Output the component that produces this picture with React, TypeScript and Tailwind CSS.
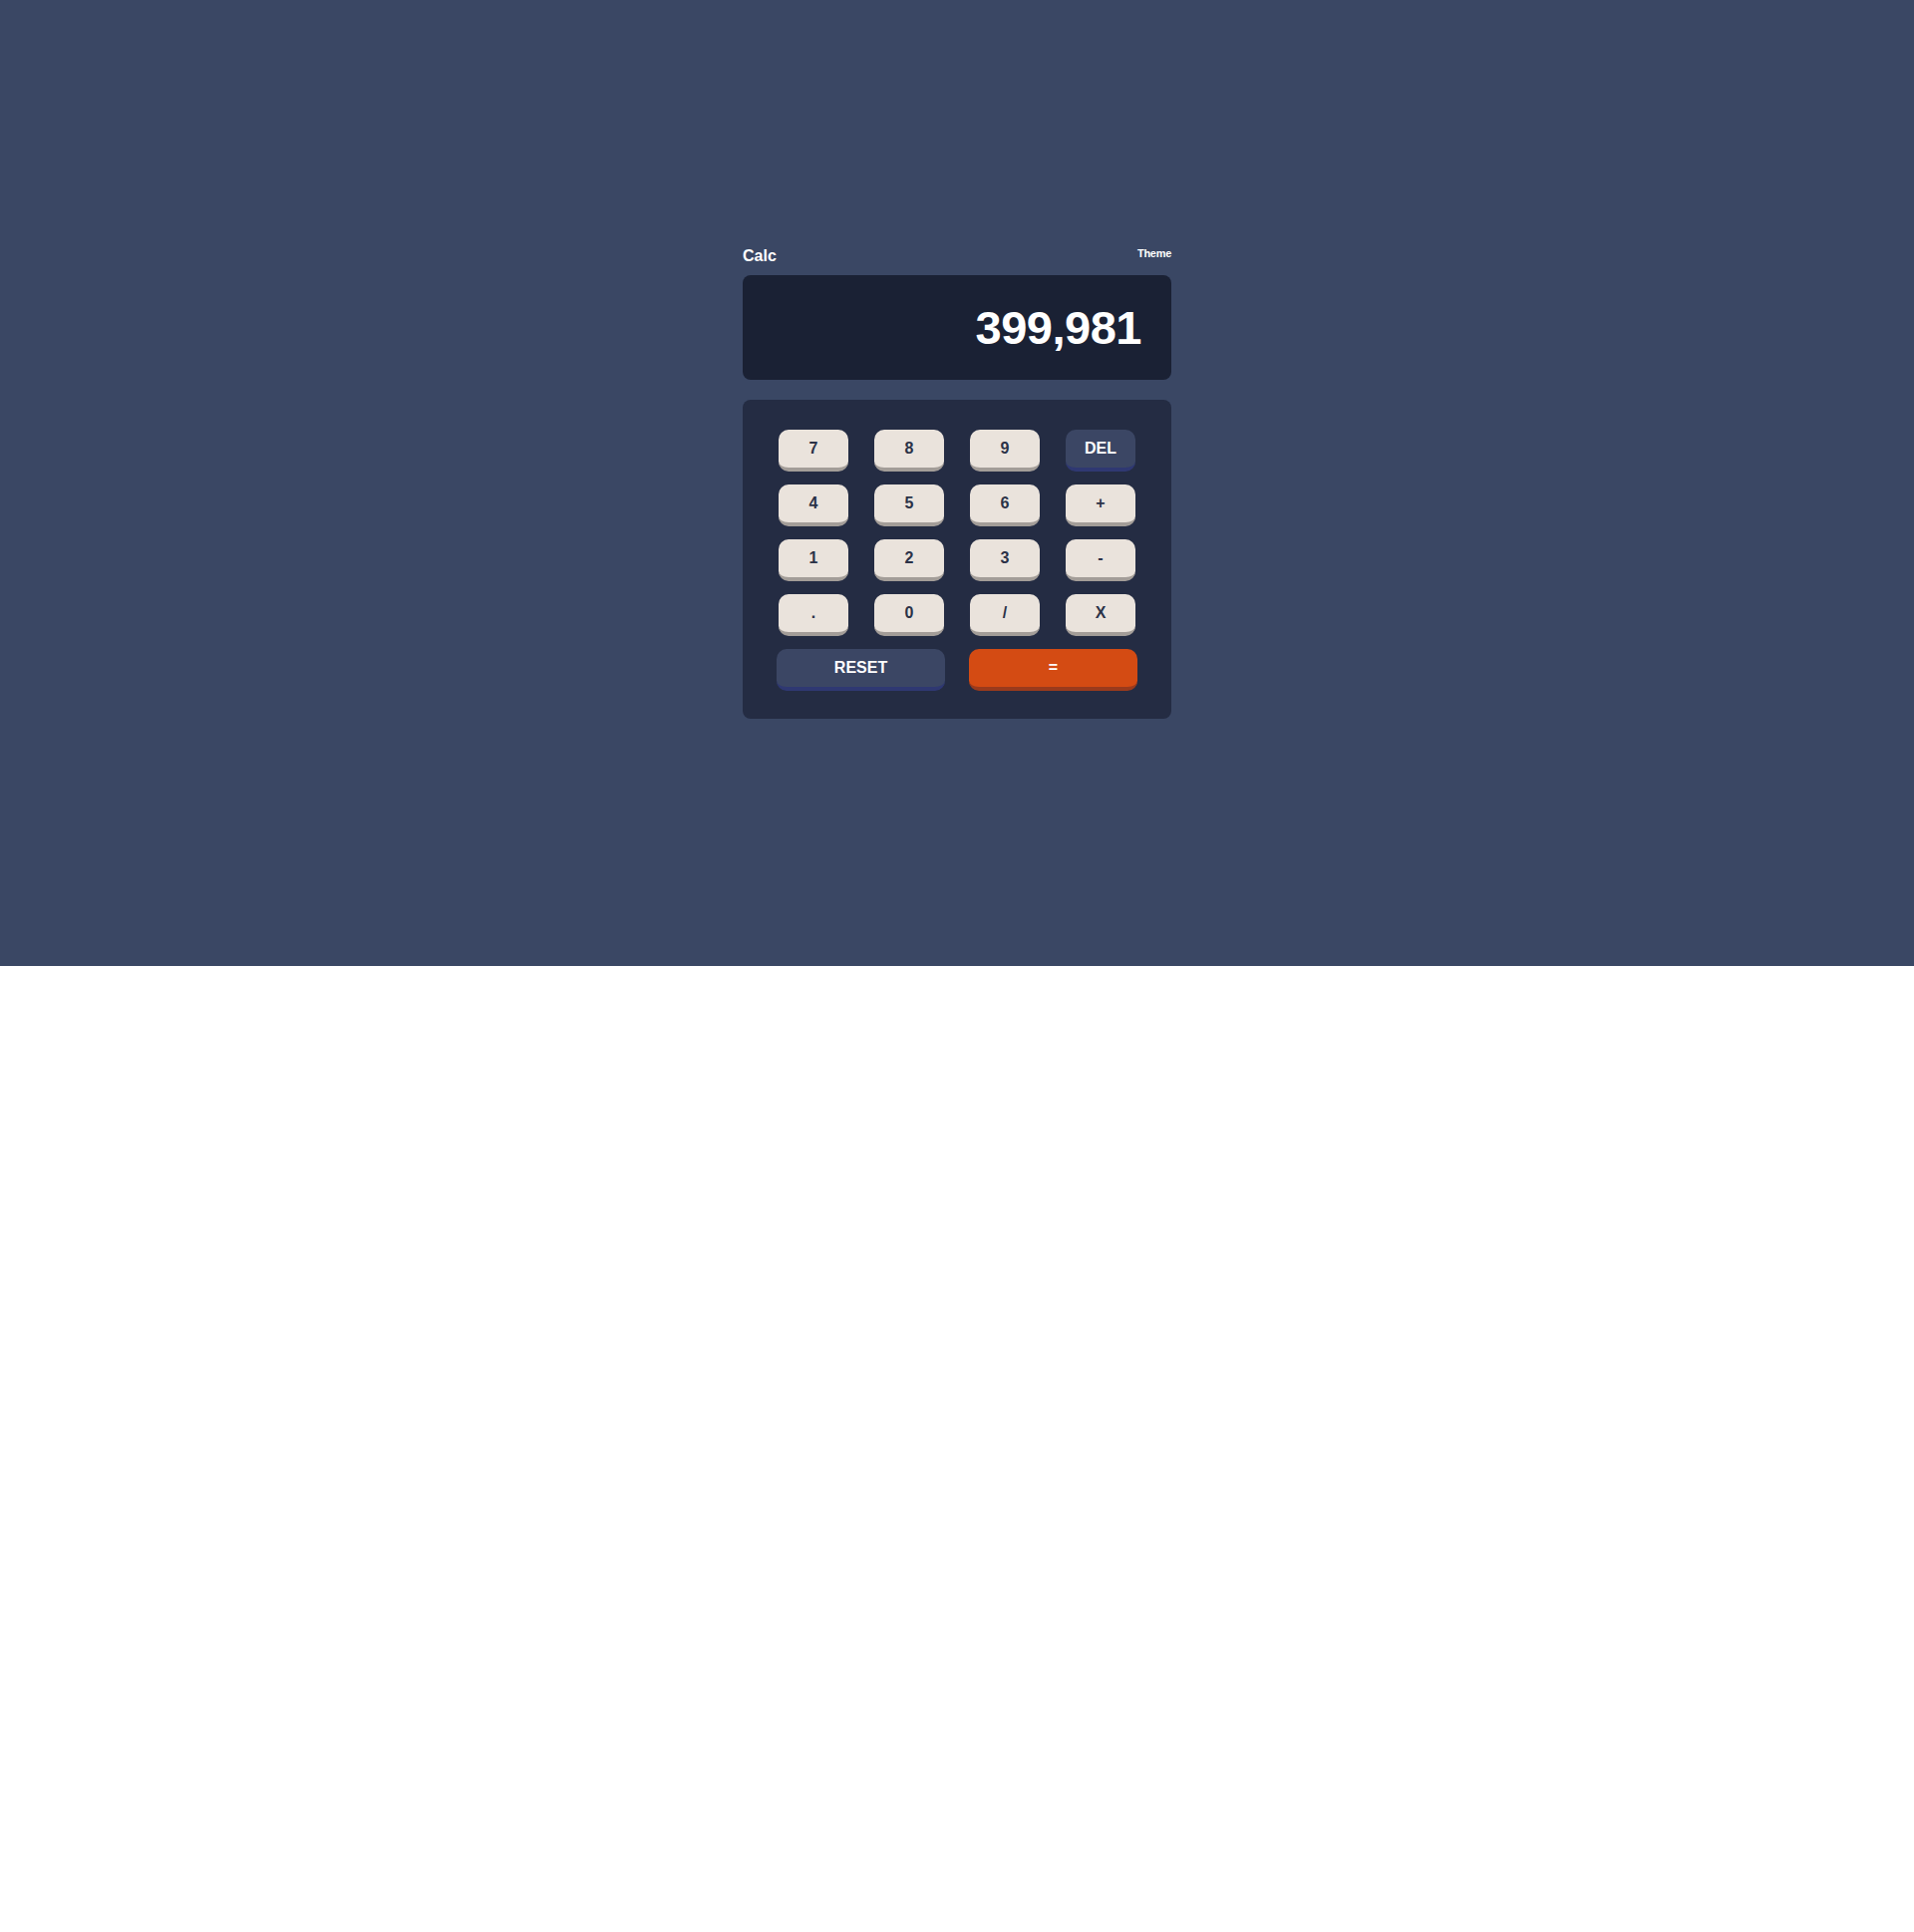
import React, { useState } from "react";

const keys = ["7", "8", "9", "DEL", "4", "5", "6", "+", "1", "2", "3", "-", ".", "0", "/", "X"];

const Key = ({ label, onClick }: { label: string; onClick: () => void }) => {
  const isDel = label === "DEL";
  return (
    <button
      onClick={onClick}
      className={
        isDel
          ? "h-[42px] rounded-[10px] border-b-4 border-[#2f3872] bg-[#3b4664] text-white text-[16px] font-bold leading-none"
          : "h-[42px] rounded-[10px] border-b-4 border-[#a39d98] bg-[#eae3dc] text-[#2b3247] text-[16px] font-bold leading-none"
      }
    >
      {label}
    </button>
  );
};

export default function App() {
  const [value, setValue] = useState("399,981");

  return (
    <div className="w-full h-[969px] bg-[#3a4764] flex items-center justify-center font-['Liberation_Sans',Arial,sans-serif]">
      <div className="w-[430px]">
        {/* header */}
        <div className="flex items-start justify-between text-white font-bold leading-none mb-[11px] h-[17px]">
          <span className="text-[16px] pt-[1px]">Calc</span>
          <span className="text-[11px] tracking-[-0.3px] pt-[1px]">Theme</span>
        </div>

        {/* display */}
        <div className="h-[105px] rounded-lg bg-[#1a2134] flex items-center justify-end pr-[30px]">
          <span className="text-white text-[47px] font-bold leading-none tracking-[-0.5px]">{value}</span>
        </div>

        {/* keypad */}
        <div className="mt-5 rounded-lg bg-[#242c43] pt-[30px] pb-[28px]">
          <div className="w-[358px] mx-auto grid grid-cols-4 gap-x-[26px] gap-y-[13px]">
            {keys.map((k) => (
              <Key key={k} label={k} onClick={() => setValue(value)} />
            ))}
          </div>
          <div className="w-[362px] mx-auto mt-[13px] flex gap-[24px]">
            <button
              onClick={() => setValue("0")}
              className="flex-1 h-[42px] rounded-[10px] border-b-4 border-[#2f3872] bg-[#3b4664] text-white text-[16px] font-bold leading-none"
            >
              RESET
            </button>
            <button className="flex-1 h-[42px] rounded-[10px] border-b-4 border-[#9a3a1c] bg-[#d44b13] text-white text-[16px] font-bold leading-none">
              =
            </button>
          </div>
        </div>
      </div>
    </div>
  );
}
